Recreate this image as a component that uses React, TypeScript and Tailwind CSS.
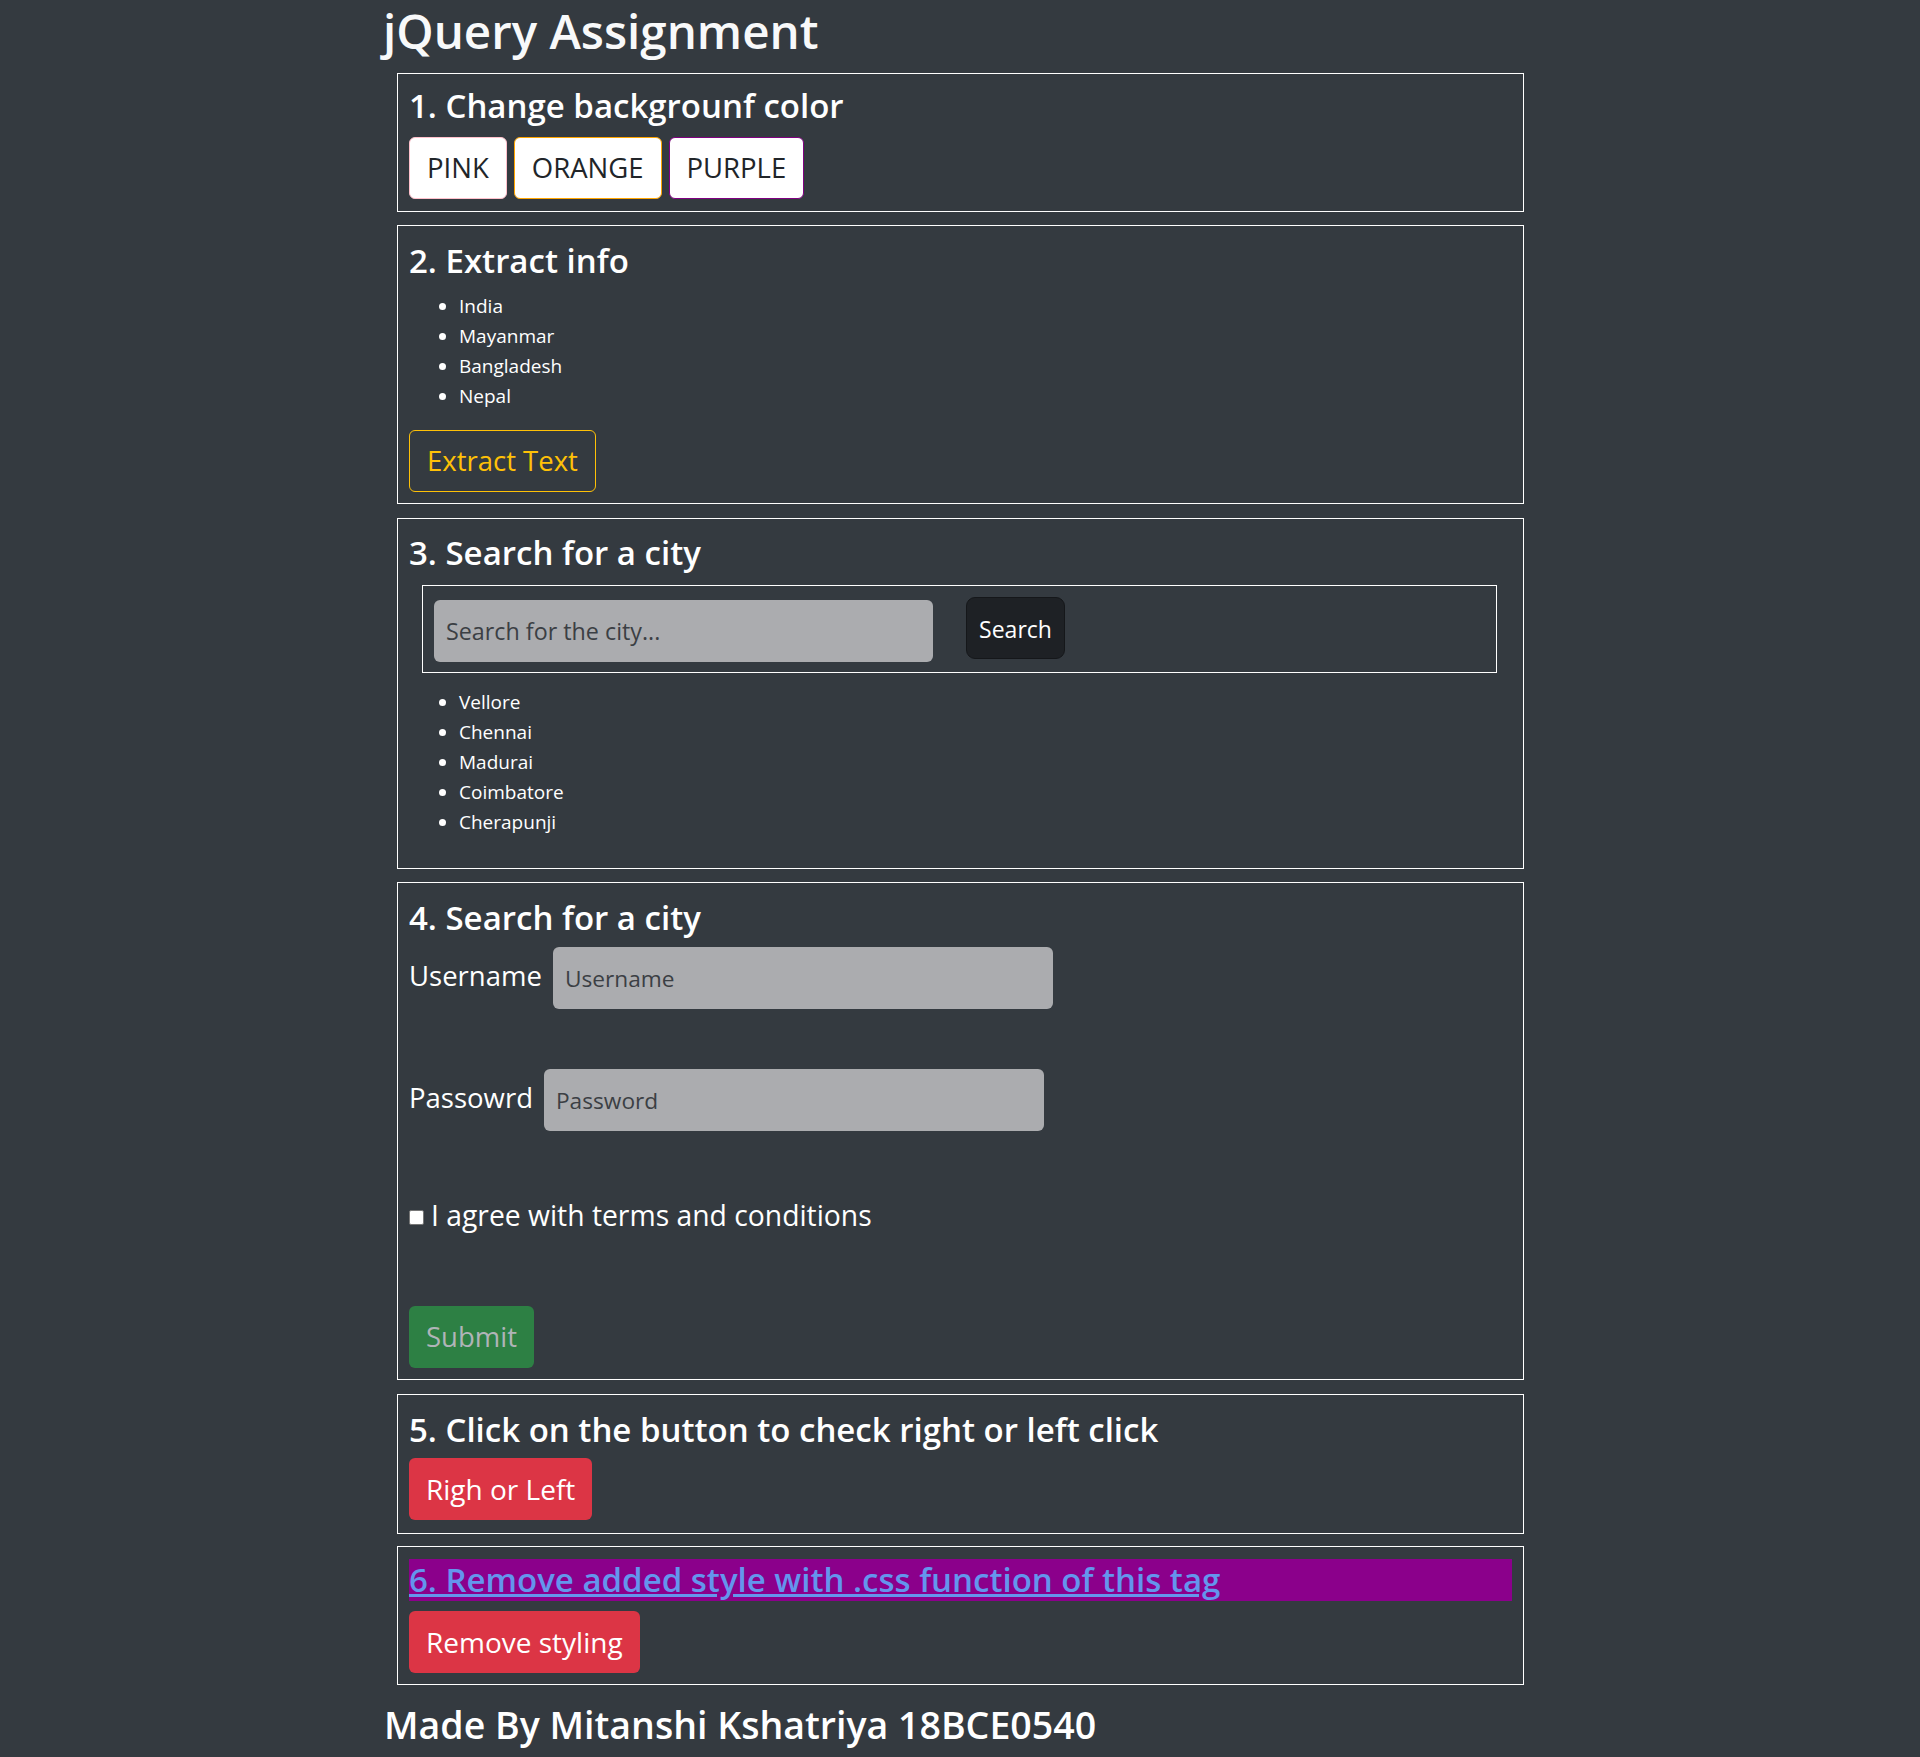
import React from "react";

const Box = ({ className = "", children }: { className?: string; children: React.ReactNode }) => (
  <div className={`ml-[19px] w-[1127px] border border-white px-[11px] ${className}`}>{children}</div>
);

const Title = ({ children }: { children: React.ReactNode }) => (
  <h3 className="h-[42px] text-[33px] leading-[42px] font-semibold text-white">{children}</h3>
);

export default function App() {
  return (
    <div className="min-h-[1757px] bg-[#343a40] text-white font-['Open_Sans',sans-serif]">
      <div className="mx-auto w-[1164px] flex flex-col">
        <h1 className="ml-[5px] h-[62px] text-[47.5px] leading-[62px] font-semibold text-[#f8f9fa] mb-[11px]">jQuery Assignment</h1>

        {/* 1 */}
        <Box className="pt-[11px] pb-[12px]">
          <Title>1. Change backgrounf color</Title>
          <div className="mt-[10px] flex gap-[7px]">
            <button className="h-[62px] px-[17px] rounded-[6px] border border-[#ffc0cb] bg-white text-[27.5px] text-[#212529]">PINK</button>
            <button className="h-[62px] px-[17px] rounded-[6px] border border-[#ffa500] bg-white text-[27.5px] text-[#212529]">ORANGE</button>
            <button className="h-[62px] px-[17px] rounded-[6px] border border-[#800080] bg-white text-[27.5px] text-[#212529]">PURPLE</button>
          </div>
        </Box>

        {/* 2 */}
        <Box className="mt-[13px] pt-[14px] pb-[11px]">
          <Title>2. Extract info</Title>
          <ul className="mt-[9px] mb-[19px] pl-[50px] list-disc text-[19px] leading-[30px]">
            <li>India</li>
            <li>Mayanmar</li>
            <li>Bangladesh</li>
            <li>Nepal</li>
          </ul>
          <div>
            <button className="h-[62px] px-[17px] rounded-[6px] border border-[#ffc107] text-[27.5px] text-[#ffc107]">Extract Text</button>
          </div>
        </Box>

        {/* 3 */}
        <Box className="mt-[14px] pt-[13px] pb-[11px]">
          <Title>3. Search for a city</Title>
          <div className="mt-[11px] ml-[13px] mr-[15px] flex items-start border border-white pl-[11px] pt-[11px] pb-[10px]">
            <input
              placeholder="Search for the city..."
              className="mt-[3px] h-[62px] w-[499px] rounded-[6px] bg-[#abacaf] px-[12px] text-[23.3px] text-[#212529] placeholder:text-[#3b3f44] outline-none"
            />
            <button className="ml-[33px] h-[62px] w-[99px] rounded-[9px] border border-[#15171a] bg-[#1e2125] pt-[3px] text-[23px] text-white">Search</button>
          </div>
          <ul className="mt-[14px] mb-[20px] pl-[50px] list-disc text-[19px] leading-[30px]">
            <li>Vellore</li>
            <li>Chennai</li>
            <li>Madurai</li>
            <li>Coimbatore</li>
            <li>Cherapunji</li>
          </ul>
        </Box>

        {/* 4 */}
        <Box className="mt-[13px] pt-[14px] pb-[11px]">
          <Title>4. Search for a city</Title>
          <div className="mt-[8px] flex items-center gap-[11px]">
            <label className="text-[27.5px] leading-[36px] mt-[-4px]">Username</label>
            <input
              placeholder="Username"
              className="h-[62px] w-[500px] rounded-[6px] bg-[#abacaf] px-[12px] text-[22.7px] text-[#212529] placeholder:text-[#3b3f44] outline-none"
            />
          </div>
          <div className="mt-[60px] flex items-center gap-[11px]">
            <label className="text-[27.5px] leading-[36px] mt-[-4px]">Passowrd</label>
            <input
              type="password"
              placeholder="Password"
              className="h-[62px] w-[500px] rounded-[6px] bg-[#abacaf] px-[12px] text-[22.7px] text-[#212529] placeholder:text-[#3b3f44] outline-none"
            />
          </div>
          <div className="mt-[66px] flex items-center h-[36px]">
            <span className="mt-[4px] inline-block h-[15px] w-[15px] rounded-[2px] border border-[#767676] bg-white"></span>
            <span className="ml-[7px] text-[28.3px] leading-[36px]">I agree with terms and conditions</span>
          </div>
          <div className="mt-[73px]">
            <button className="h-[62px] px-[17px] rounded-[6px] bg-[#2d8044] text-[27.5px] text-[#b0b4b8]">Submit</button>
          </div>
        </Box>

        {/* 5 */}
        <Box className="mt-[14px] pt-[14px] pb-[13px]">
          <Title>5. Click on the button to check right or left click</Title>
          <div className="mt-[7px]">
            <button className="h-[62px] px-[17px] rounded-[6px] bg-[#dc3545] text-[28px] text-white">Righ or Left</button>
          </div>
        </Box>

        {/* 6 */}
        <Box className="mt-[12px] pt-[12px] pb-[11px]">
          <div className="h-[42px] bg-[#8b008b] text-[33px] leading-[42px] font-semibold">
            <a href="#" className="text-[#6495ed] underline">6. Remove added style with .css function of this tag</a>
          </div>
          <div className="mt-[10px]">
            <button className="h-[62px] px-[17px] rounded-[6px] bg-[#dc3545] text-[28px] text-white">Remove styling</button>
          </div>
        </Box>

        <h2 className="mt-[18px] ml-[6px] text-[37.5px] leading-[44px] font-semibold">Made By Mitanshi Kshatriya 18BCE0540</h2>
      </div>
    </div>
  );
}
